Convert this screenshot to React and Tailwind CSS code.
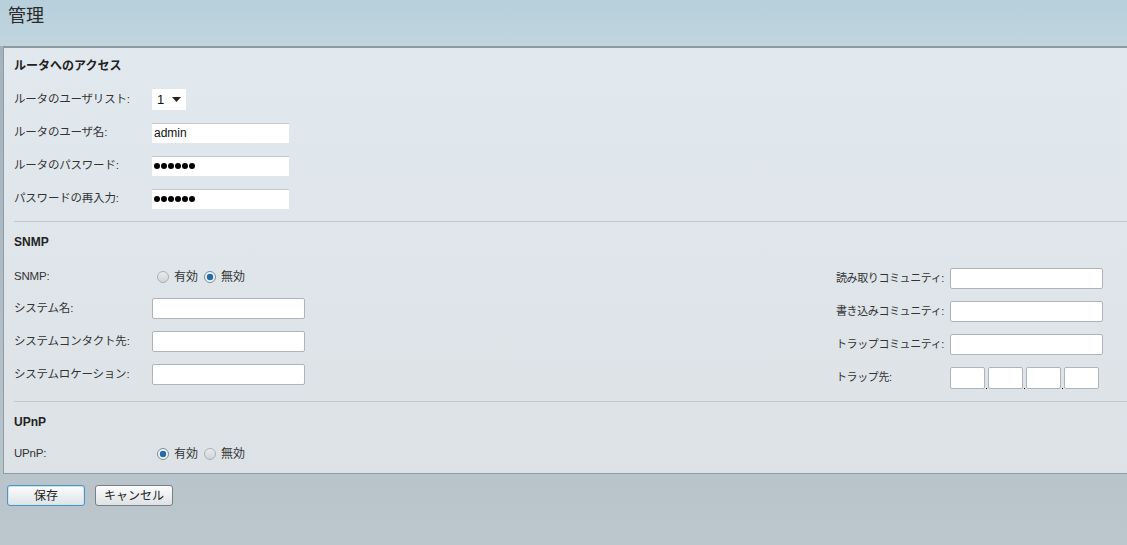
import React from 'react';

const font = { fontFamily: '"Liberation Sans", "Noto Sans CJK JP", sans-serif' };

const Radio = ({ checked }) => (
  <span
    className={`inline-flex items-center justify-center w-[12px] h-[12px] rounded-full border ${
      checked ? 'border-[#7d8c99] bg-[#f4f6f8]' : 'border-[#a9b1b8] bg-gradient-to-b from-[#e9ecef] to-[#cfd4d8]'
    }`}
  >
    {checked && <span className="w-[6px] h-[6px] rounded-full bg-[#1f6db0] shadow-[0_0_1px_#0d3e66]" />}
  </span>
);

const RadioPair = ({ on }) => (
  <div className="flex items-center text-[12px] text-[#333]">
    <Radio checked={on} />
    <span className="ml-[5px] mr-[6px]">有効</span>
    <Radio checked={!on} />
    <span className="ml-[5px]">無効</span>
  </div>
);

const Field = ({ w = 'w-[153px]', children }) => (
  <div className={`${w} h-[21px] bg-white border border-[#aeb4b9] rounded-[2px] flex items-center px-[2px] text-[12px]`}>
    {children}
  </div>
);

const PlainField = ({ children }) => (
  <div className="w-[137px] h-[20px] bg-white border-t border-[#c4c8cb] flex items-center px-[2px] text-[12px] text-[#111]">
    {children}
  </div>
);

const Dots = () => (
  <div className="flex gap-[1px]">
    {[0, 1, 2, 3, 4, 5].map((i) => (
      <span key={i} className="w-[6px] h-[6px] rounded-full bg-black" />
    ))}
  </div>
);

const Row = ({ label, h = 'h-[33px]', labelCls = 'w-[138px] text-[11.5px] tracking-[-0.2px]', children }) => (
  <div className={`flex items-center ${h}`}>
    <div className={`${labelCls} text-[#333] whitespace-nowrap`}>{label}</div>
    {children}
  </div>
);

const rightLabel = 'w-[114px] text-[11px] tracking-[-0.4px]';

const Heading = ({ children, h }) => (
  <div className={`flex items-center ${h} text-[12px] font-bold text-[#222]`}>{children}</div>
);

const Box = () => <div className="w-[35px] h-[22px] bg-white border border-[#aeb4b9] rounded-[2px]" />;
const Dot = () => <span className="w-[3px] flex justify-center"><span className="w-[1px] h-[1px] bg-black" /></span>;

export default function App() {
  return (
    <div style={font} className="w-[1127px] h-[545px] overflow-hidden bg-gradient-to-b from-[#a3b0ba] to-[#bcc6cd] flex flex-col">
      <div className="h-[46px] bg-gradient-to-b from-[#b7d0dc] to-[#c1d5de] pl-[8px] pt-[4px]">
        <div className="text-[18px] text-[#2a2a2a] leading-[24px]">管理</div>
      </div>
      <div className="ml-[3px] bg-gradient-to-b from-[#e2e9ee] to-[#dce2e6] border-t-[2px] border-l border-b border-t-[#8c9ba3] border-l-[#8e9ca5] border-b-[#8e9ca5] pl-[10px]">
        <Heading h="h-[35px]">ルータへのアクセス</Heading>
        <Row label="ルータのユーザリスト:">
          <div className="w-[34px] h-[21px] bg-white flex items-center pl-[5px] text-[13px] text-[#111]">
            1
            <svg width="9" height="5" viewBox="0 0 9 5" className="ml-[8px]">
              <path d="M0 0h9L4.5 5z" fill="#222" />
            </svg>
          </div>
        </Row>
        <Row label="ルータのユーザ名:">
          <PlainField>admin</PlainField>
        </Row>
        <Row label="ルータのパスワード:">
          <PlainField><Dots /></PlainField>
        </Row>
        <Row label="パスワードの再入力:">
          <PlainField><Dots /></PlainField>
        </Row>
        <div className="mt-[6px] border-t border-[#c2c8cc]" />

        <Heading h="h-[40px]">SNMP</Heading>
        <div className="flex">
          <div className="flex flex-col">
            <Row label="SNMP:" h="h-[30px]">
              <div className="pl-[5px]"><RadioPair on={false} /></div>
            </Row>
            <Row label="システム名:"><Field /></Row>
            <Row label="システムコンタクト先:"><Field /></Row>
            <Row label="システムロケーション:"><Field /></Row>
          </div>
          <div className="ml-auto mr-[24px] flex flex-col">
            <Row label="読み取りコミュニティ:" labelCls={rightLabel}><Field /></Row>
            <Row label="書き込みコミュニティ:" labelCls={rightLabel}><Field /></Row>
            <Row label="トラップコミュニティ:" labelCls={rightLabel}><Field /></Row>
            <Row label="トラップ先:" labelCls={rightLabel}>
              <div className="flex items-end">
                <Box /><Dot /><Box /><Dot /><Box /><Dot /><Box />
              </div>
            </Row>
          </div>
        </div>
        <div className="mt-[7px] border-t border-[#c2c8cc]" />

        <Heading h="h-[40px]">UPnP</Heading>
        <Row label="UPnP:" h="h-[24px]">
          <div className="pl-[5px]"><RadioPair on={true} /></div>
        </Row>
        <div className="h-[7px]" />
      </div>

      <div className="flex gap-[10px] pl-[7px] mt-[11px]">
        <button className="w-[78px] h-[21px] rounded-[3px] border border-[#4e94c2] bg-gradient-to-b from-[#fbfcfd] to-[#dfe4e8] text-[12px] text-[#222] leading-none shadow-[inset_0_0_0_1px_#cfe4f2]">
          保存
        </button>
        <button className="w-[78px] h-[21px] rounded-[3px] border border-[#7b7f83] bg-gradient-to-b from-[#fbfcfd] to-[#dfe2e5] text-[12px] text-[#222] leading-none">
          キャンセル
        </button>
      </div>
    </div>
  );
}
